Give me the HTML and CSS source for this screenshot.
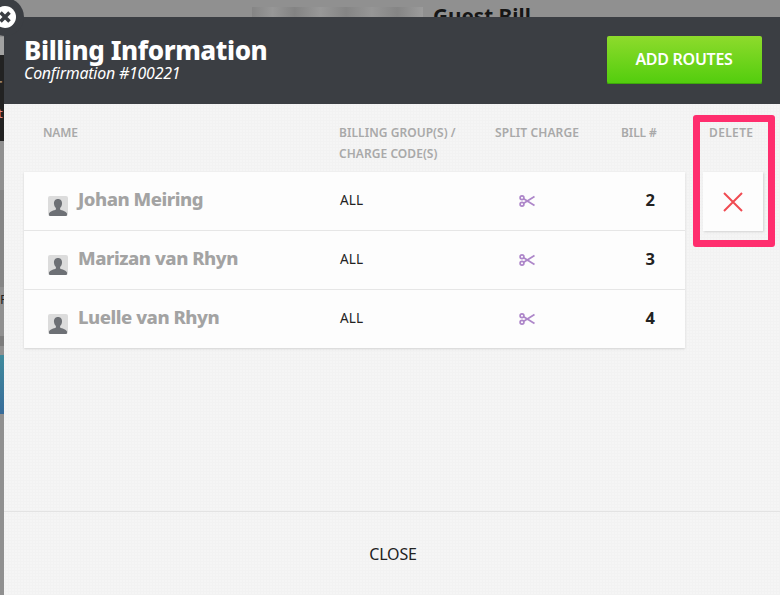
FILE: index.html
```html
<!DOCTYPE html>
<html lang="en">
<head>
<meta charset="utf-8">
<title>Billing Information</title>
<link rel="stylesheet" href="styles.css">
</head>
<body>
<div class="backdrop">
  <div class="bg-title"><span class="bg-blur"></span><span class="bg-guest">Guest Bill</span></div>
  <div class="bg-strip bg-light"></div>
  <div class="bg-strip bg-dark"><span class="bg-r">r</span><span class="bg-t">t</span></div>
  <div class="bg-strip bg-grey"></div>
  <div class="bg-strip bg-f">F</div>
  <div class="bg-strip bg-band"></div>
  <div class="bg-strip bg-blue"></div>
</div>
<section class="modal">
  <header class="modal-head">
    <div class="titles">
      <h1>Billing Information</h1>
      <p>Confirmation #100221</p>
    </div>
    <button class="add">ADD ROUTES</button>
  </header>
  <main class="modal-body">
    <div class="labels">
      <span class="l-name">NAME</span>
      <span class="l-code">BILLING GROUP(S) /<br>CHARGE CODE(S)</span>
      <span class="l-split">SPLIT CHARGE</span>
      <span class="l-bill">BILL #</span>
      <span class="l-del">DELETE</span>
    </div>
    <div class="content">
      <div class="card">
        <div class="row">
          <div class="person">
            <svg class="avatar" viewBox="0 0 20 20"><rect width="20" height="20" rx="2" fill="#dcdcdc"/><path d="M10 3c-3 0-4.300 2.200-4 5 .2 1.800 1 3.200 1.900 4.100v1.400C6 14.600 2 15 1 17.500V19q0 1 1 1h16q1 0 1-1v-1.500c-1-2.500-5-2.900-6.900-4v-1.400c.9-.9 1.700-2.300 1.900-4.100.3-2.800-1-5-4-5z" fill="#6d7075"/></svg>
            <span class="name">Johan Meiring</span>
          </div>
          <span class="code">ALL</span>
          <svg class="scissors" viewBox="0 0 16 12"><g fill="none" stroke="#ad86c9" stroke-width="1.700"><circle cx="3" cy="2.800" r="1.900"/><circle cx="3" cy="9.200" r="1.900"/><path d="M4.700 3.800 15.500 10.500M4.700 8.200 15.500 1.500"/></g></svg>
          <span class="bill">2</span>
        </div>
        <div class="row">
          <div class="person">
            <svg class="avatar" viewBox="0 0 20 20"><rect width="20" height="20" rx="2" fill="#dcdcdc"/><path d="M10 3c-3 0-4.300 2.200-4 5 .2 1.800 1 3.200 1.900 4.100v1.400C6 14.600 2 15 1 17.500V19q0 1 1 1h16q1 0 1-1v-1.500c-1-2.500-5-2.900-6.900-4v-1.400c.9-.9 1.700-2.300 1.900-4.100.3-2.800-1-5-4-5z" fill="#6d7075"/></svg>
            <span class="name">Marizan van Rhyn</span>
          </div>
          <span class="code">ALL</span>
          <svg class="scissors" viewBox="0 0 16 12"><g fill="none" stroke="#ad86c9" stroke-width="1.700"><circle cx="3" cy="2.800" r="1.900"/><circle cx="3" cy="9.200" r="1.900"/><path d="M4.700 3.800 15.500 10.500M4.700 8.200 15.500 1.500"/></g></svg>
          <span class="bill">3</span>
        </div>
        <div class="row">
          <div class="person">
            <svg class="avatar" viewBox="0 0 20 20"><rect width="20" height="20" rx="2" fill="#dcdcdc"/><path d="M10 3c-3 0-4.300 2.200-4 5 .2 1.800 1 3.200 1.900 4.100v1.400C6 14.600 2 15 1 17.500V19q0 1 1 1h16q1 0 1-1v-1.500c-1-2.500-5-2.900-6.900-4v-1.400c.9-.9 1.700-2.300 1.900-4.100.3-2.800-1-5-4-5z" fill="#6d7075"/></svg>
            <span class="name">Luelle van Rhyn</span>
          </div>
          <span class="code">ALL</span>
          <svg class="scissors" viewBox="0 0 16 12"><g fill="none" stroke="#ad86c9" stroke-width="1.700"><circle cx="3" cy="2.800" r="1.900"/><circle cx="3" cy="9.200" r="1.900"/><path d="M4.700 3.800 15.500 10.500M4.700 8.200 15.500 1.500"/></g></svg>
          <span class="bill">4</span>
        </div>
      </div>
      <div class="delete">
        <svg class="x" viewBox="0 0 20 20"><path d="M1 1 19 19M19 1 1 19" fill="none" stroke="#f04b52" stroke-width="2"/></svg>
      </div>
    </div>
    <div class="highlight"></div>
  </main>
  <footer class="modal-foot">CLOSE</footer>
</section>
<div class="close-tab">
  <svg viewBox="0 0 22 22"><circle cx="11" cy="11" r="11" fill="#fff"/><path d="M6.500 6.500 15.500 15.500M15.500 6.500 6.500 15.500" fill="none" stroke="#3b3e43" stroke-width="3.600"/></svg>
</div>
</body>
</html>
```

FILE: styles.css
```css
* { box-sizing: border-box; }
html, body { margin: 0; height: 100%; overflow: hidden; }
body {
  position: relative;
  width: 780px;
  height: 595px;
  background: #909090;
  font-family: "Noto Sans", "Open Sans", sans-serif;
  color: #222;
}
.backdrop { position: absolute; inset: 0; overflow: hidden; }
.bg-title { position: absolute; left: 252px; top: 0; height: 17px; width: 300px; display: flex; align-items: flex-end; gap: 10px; }
.bg-blur { width: 171px; height: 10px; background: linear-gradient(90deg, #858585, #979797 12%, #838383 25%, #989898 40%, #858585 55%, #969696 70%, #858585 85%, #9c9c9c); }
.bg-guest { font-size: 20.700px; font-weight: 700; color: #161616; line-height: 24px; position: relative; top: 11px; }
.bg-strip { position: absolute; left: 0; width: 4px; overflow: hidden; font-size: 13px; }
.bg-light { top: 37px; height: 18px; background: #a2a2a2; }
.bg-dark { top: 55px; height: 86px; background: #222; color: #c9b4b4; }
.bg-r { position: absolute; left: -6px; top: 16px; font-size: 20px; color: #a08a70; }
.bg-t { position: absolute; left: -2px; top: 49px; color: #d88; }
.bg-grey { top: 190px; height: 97px; background: #858585; }
.bg-f { top: 290px; height: 18px; color: #222; line-height: 18px; }
.bg-band { top: 336px; height: 10px; background: #7c7c7c; }
.bg-blue { top: 355px; height: 59px; background: linear-gradient(#3f8a9c, #386c9a); }

.modal {
  position: absolute;
  left: 4px;
  top: 17px;
  right: 0;
  bottom: 0;
  display: flex;
  flex-direction: column;
  background-color: #f5f5f5;
  background-image: radial-gradient(#f2f2f2 1px, transparent 1.200px);
  background-size: 3px 3px;
}
.modal-head {
  height: 87px;
  background: #3b3e43;
  display: flex;
  justify-content: space-between;
  align-items: flex-start;
  padding: 19px 18px 0 20px;
  color: #fff;
}
.titles { padding-top: 1px; }
.titles h1 { margin: 0; font-size: 26px; line-height: 26px; font-weight: 800; letter-spacing: -0.42px; }
.titles p { margin: 0; font-size: 15.900px; line-height: 20px; font-style: italic; letter-spacing: -0.2px; }
.add {
  width: 155px;
  height: 48px;
  border: 0;
  border-radius: 2px;
  padding: 0 1px 3px 0;
  background: linear-gradient(#8edb2c, #52cd0d);
  box-shadow: inset 0 -1px 0 #3ea80a;
  color: #fff;
  font: 600 16px "Noto Sans", sans-serif;
  letter-spacing: -0.28px;
}
.modal-body { position: relative; flex: 1; padding: 0 17px 0 20px; border-bottom: 1px solid #e3e3e3; }
.labels {
  position: relative;
  height: 68px;
  font-size: 12px;
  line-height: 21px;
  font-weight: 600;
  color: #a9a9a9;
  letter-spacing: 0.05px;
}
.labels span { position: absolute; top: 18px; white-space: nowrap; }
.l-name { left: 19px; letter-spacing: -0.2px; }
.l-code { left: 315px; }
.l-split { left: 471px; letter-spacing: 0.1px; }
.l-bill { left: 597px; letter-spacing: -0.1px; }
.l-del { left: 685px; letter-spacing: 0.35px; }
.content { display: flex; gap: 18px; align-items: flex-start; }
.card { width: 661px; background: #fdfdfd; box-shadow: 0 1px 2px #d4d4d4; }
.row {
  display: grid;
  grid-template-columns: 315px 120px 136px 1fr;
  height: 59px;
  align-items: center;
  border-bottom: 1px solid #e6e6e6;
}
.row:last-child { border-bottom: 0; height: 58px; }
.person { display: flex; align-items: flex-start; gap: 10px; padding-left: 24px; height: 100%; }
.avatar { width: 20px; height: 20px; margin-top: 24px; flex: none; }
.name { margin-top: 14px; font-size: 18.500px; line-height: 26px; font-weight: 800; color: #a3a3a3; letter-spacing: -0.47px; }
.code { font-size: 13.500px; line-height: 18px; color: #222; margin: 0 0 2px 1px; letter-spacing: 0.1px; }
.scissors { width: 16px; height: 12px; justify-self: center; margin-bottom: 1px; }
.bill { justify-self: end; margin: 0 30px 4px 0; font-size: 16.500px; font-weight: 700; color: #222; }
.delete {
  width: 60px;
  height: 59px;
  background: #fdfdfd;
  box-shadow: 1px 1px 2px #d4d4d4;
  display: flex;
  align-items: center;
  justify-content: center;
}
.x { width: 20px; height: 20px; }
.highlight {
  position: absolute;
  left: 689px;
  top: 11px;
  width: 82px;
  height: 132px;
  border: 7px solid #ff2e6e;
  border-radius: 3px;
}
.modal-foot {
  height: 83px;
  text-align: center;
  font-size: 16px;
  line-height: 20px;
  padding: 32px 0 0 2px;
  color: #222;
  letter-spacing: -0.15px;
}
.close-tab {
  position: absolute;
  left: -14px;
  top: -2px;
  width: 38px;
  height: 38px;
  border-radius: 50%;
  background: #3b3e43;
  display: flex;
  align-items: center;
  justify-content: center;
}
.close-tab svg { width: 22px; height: 22px; }
```
